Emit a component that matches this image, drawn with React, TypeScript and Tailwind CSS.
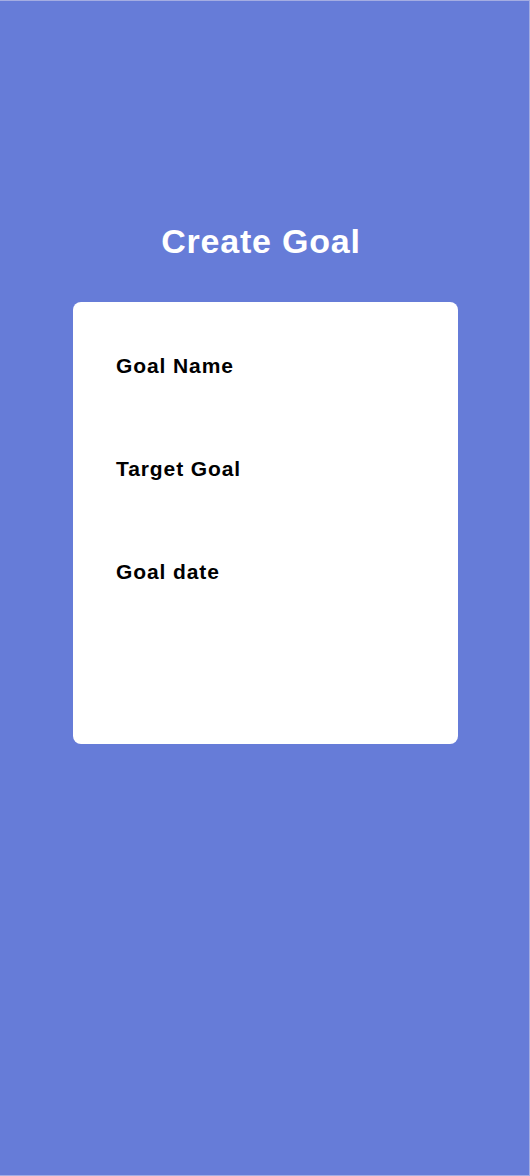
export default function App() {
  const fields = ['Goal Name', 'Target Goal', 'Goal date'];

  return (
    <div
      className="min-h-[1176px] w-[530px] bg-[#667cd8] border-t border-r border-b border-[#a4ade2] flex flex-col pt-[223px]"
      style={{ fontFamily: '"Liberation Sans", Arial, sans-serif' }}
    >
      <h1 className="self-center text-[34px] leading-[34px] font-bold text-white tracking-[0.8px] mr-[7px]">
        Create Goal
      </h1>

      <div className="mt-[44px] ml-[73px] w-[385px] h-[442px] bg-white rounded-lg pt-[53px] pl-[43px] flex flex-col gap-[81px]">
        {fields.map((f) => (
          <div key={f} className="text-[21px] leading-[22px] font-bold text-black tracking-[0.9px]">
            {f}
          </div>
        ))}
      </div>
    </div>
  );
}
